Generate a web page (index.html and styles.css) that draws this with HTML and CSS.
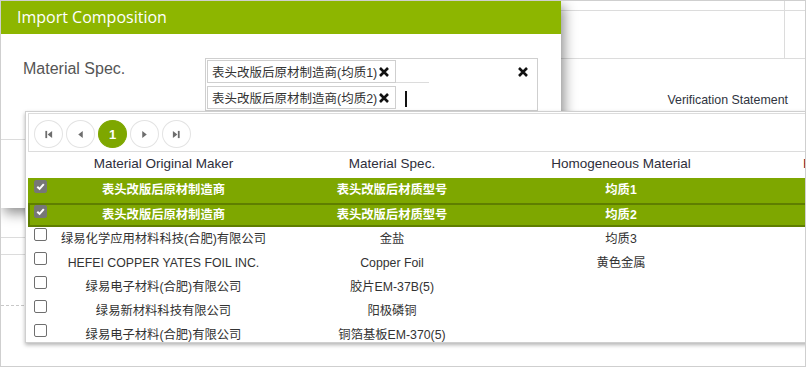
FILE: index.html
```html
<!DOCTYPE html>
<html>
<head>
<meta charset="utf-8">
<link rel="stylesheet" href="styles.css">
</head>
<body>
<div class="page">
  <div class="bg">
    <div class="bg-row bg-r1"><div class="bg-c1"></div><div class="bg-c2"></div></div>
    <div class="bg-row bg-r2"><div class="bg-c1"></div><div class="bg-c2"></div></div>
    <div class="bg-r3"><span class="verif">Verification Statement</span></div>
    <div class="bg-r4"></div>
    <div class="bg-r5"></div>
    <div class="bg-r6"></div>
  </div>

  <div class="dialog">
    <div class="dlg-head">Import Composition</div>
    <div class="dlg-body">
      <div class="form-row">
        <div class="form-label">Material Spec.</div>
        <div class="ms">
          <div class="ms-tags">
            <div class="ms-line">
              <span class="tag">表头改版后原材制造商(均质1)<svg class="tag-x" viewBox="0 0 12 12"><path d="M2 2L10 10M10 2L2 10"/></svg></span>
              <span class="ms-under"></span>
            </div>
            <div class="ms-line">
              <span class="tag">表头改版后原材制造商(均质2)<svg class="tag-x" viewBox="0 0 12 12"><path d="M2 2L10 10M10 2L2 10"/></svg></span>
              <span class="caret"></span>
            </div>
          </div>
          <svg class="ms-clear" viewBox="0 0 12 12"><path d="M2 2L10 10M10 2L2 10"/></svg>
        </div>
      </div>
      <div class="dlg-sep"></div>
    </div>
  </div>

  <div class="dropdown">
    <div class="pager">
      <span class="pg-btn"><svg viewBox="0 0 10 10"><rect x="1.5" y="1" width="2" height="8"/><path d="M9 1L4 5L9 9Z"/></svg></span>
      <span class="pg-btn"><svg viewBox="0 0 10 10"><path d="M7.5 1L2.5 5L7.5 9Z"/></svg></span>
      <span class="pg-btn pg-active">1</span>
      <span class="pg-btn"><svg viewBox="0 0 10 10"><path d="M2.5 1L7.5 5L2.5 9Z"/></svg></span>
      <span class="pg-btn"><svg viewBox="0 0 10 10"><path d="M1 1L6 5L1 9Z"/><rect x="6.5" y="1" width="2" height="8"/></svg></span>
    </div>
    <div class="grid">
      <div class="row head">
        <div></div>
        <div>Material Original Maker</div>
        <div>Material Spec.</div>
        <div>Homogeneous Material</div>
        <div class="c4">Remark</div>
      </div>
      <div class="row sel">
        <div class="cb-cell"><span class="cb on"><svg viewBox="0 0 12 12"><path d="M2.5 6.2L5 8.6L9.6 3.4"/></svg></span></div>
        <div>表头改版后原材制造商</div>
        <div>表头改版后材质型号</div>
        <div>均质1</div>
        <div></div>
      </div>
      <div class="row sel focus">
        <div class="cb-cell"><span class="cb on"><svg viewBox="0 0 12 12"><path d="M2.5 6.2L5 8.6L9.6 3.4"/></svg></span></div>
        <div>表头改版后原材制造商</div>
        <div>表头改版后材质型号</div>
        <div>均质2</div>
        <div></div>
      </div>
      <div class="row">
        <div class="cb-cell"><span class="cb"></span></div>
        <div>绿易化学应用材料科技(合肥)有限公司</div>
        <div>金盐</div>
        <div>均质3</div>
        <div></div>
      </div>
      <div class="row">
        <div class="cb-cell"><span class="cb"></span></div>
        <div>HEFEI COPPER YATES FOIL INC.</div>
        <div>Copper Foil</div>
        <div>黄色金属</div>
        <div></div>
      </div>
      <div class="row">
        <div class="cb-cell"><span class="cb"></span></div>
        <div>绿易电子材料(合肥)有限公司</div>
        <div>胶片EM-37B(5)</div>
        <div></div>
        <div></div>
      </div>
      <div class="row">
        <div class="cb-cell"><span class="cb"></span></div>
        <div>绿易新材料科技有限公司</div>
        <div>阳极磷铜</div>
        <div></div>
        <div></div>
      </div>
      <div class="row">
        <div class="cb-cell"><span class="cb"></span></div>
        <div>绿易电子材料(合肥)有限公司</div>
        <div>铜箔基板EM-370(5)</div>
        <div></div>
        <div></div>
      </div>
    </div>
  </div>
</div>
</body>
</html>
```

FILE: styles.css
```css
* { box-sizing: border-box; }
html, body { margin: 0; padding: 0; background: #fff; }
body { font-family: "Liberation Sans", "Noto Sans CJK SC", sans-serif; color: #333; }

.page {
  position: relative;
  width: 806px;
  height: 367px;
  border: 1px solid #cfcfcf;
  overflow: hidden;
  background: #fff;
}

/* background table */
.bg { display: flex; flex-direction: column; }
.bg-row { display: grid; grid-template-columns: 1fr 21px; border-bottom: 1px solid #dcdcdc; }
.bg-c2 { border-left: 1px solid #dcdcdc; }
.bg-r1 { height: 10px; }
.bg-r2 { height: 48px; }
.bg-r3 {
  height: 53px;
  border-bottom: 1px solid #dcdcdc;
  display: flex;
  justify-content: flex-end;
  align-items: flex-end;
  padding: 0 17px 4px 0;
}
.verif { font-size: 12.4px; color: #2f3440; }
.bg-r4 { height: 126px; border-bottom: 1px solid #dcdcdc; }
.bg-r5 { height: 17px; border-bottom: 1px solid #dcdcdc; }
.bg-r6 { height: 51px; border-bottom: 1px dashed #c8c8c8; }

/* dialog */
.dialog {
  position: absolute;
  left: 0;
  top: 0;
  width: 560px;
  height: 207px;
  background: #fff;
  box-shadow: 3px 5px 12px rgba(0, 0, 0, 0.45);
}
.dlg-head {
  height: 33px;
  line-height: 32px;
  background: #8db600;
  color: #fff;
  font-family: "Open Sans", sans-serif;
  font-size: 16px;
  padding-left: 16px;
}
.dlg-body { padding-top: 24px; }
.form-row { display: flex; align-items: flex-start; }
.form-label {
  width: 204px;
  padding-left: 22px;
  padding-top: 2px;
  font-size: 16px;
  color: #555;
}
.ms {
  width: 333px;
  height: 53px;
  border: 1px solid #cfcfcf;
  padding: 1px;
  display: flex;
  justify-content: space-between;
}
.ms-tags { display: flex; flex-direction: column; gap: 3px; }
.ms-line { display: flex; align-items: stretch; height: 23px; }
.tag {
  display: flex;
  align-items: center;
  height: 23px;
  border: 1px solid #cfcfcf;
  padding: 0 5px 0 4px;
  font-size: 12.5px;
  color: #333;
  background: #fff;
}
.tag-x { width: 12px; height: 12px; margin-left: 1px; }
.tag-x path, .ms-clear path { stroke: #111; stroke-width: 2.6; fill: none; }
.ms-under { width: 33px; border-bottom: 1px solid #dcdcdc; }
.caret { width: 2px; height: 16px; background: #111; align-self: center; margin-left: 9px; margin-top: 2px; }
.ms-clear { width: 12px; height: 12px; margin: 6px 7px 0 0; }
.dlg-sep { margin-top: 28px; height: 1px; background: #dcdcdc; }

/* dropdown */
.dropdown {
  position: absolute;
  left: 24px;
  top: 110px;
  width: 800px;
  height: 232px;
  background: #fff;
  border: 1px solid #cfcfcf;
  padding: 1px 2px;
  box-shadow: 0 2px 4px rgba(0, 0, 0, 0.3);
  overflow: hidden;
}
.pager {
  height: 39px;
  border: 1px solid #dcdcdc;
  padding: 6px 5px 2px;
  display: flex;
  gap: 3px;
}
.pg-btn {
  width: 29px;
  height: 28px;
  border: 1px solid #e3e3e3;
  border-radius: 50%;
  display: flex;
  align-items: center;
  justify-content: center;
}
.pg-btn svg { width: 9px; height: 9px; fill: #6d6d6d; }
.pg-active {
  background: #7ea700;
  border-color: #7ea700;
  color: #fff;
  font-weight: bold;
  font-size: 13px;
}

.grid { display: flex; flex-direction: column; }
.row {
  display: grid;
  grid-template-columns: 27px 217px 240px 218px 1fr;
  height: 24px;
  line-height: 24px;
  font-size: 12.3px;
  color: #333;
  text-align: center;
  white-space: nowrap;
}
.row.head {
  height: 26px;
  line-height: 24px;
  font-size: 13.5px;
  color: #2e2e3a;
}
.row.head .c4 { text-align: left; padding-left: 73px; color: #7a1530; }
.row.sel { background: #7ea700; color: #fff; font-weight: bold; height: 25px; }
.row.sel.focus { height: 24px; box-shadow: inset 0 0 0 2px #5f7e00; }
.cb-cell { text-align: left; padding-left: 6px; }
.cb {
  display: inline-block;
  vertical-align: top;
  margin-top: 1px;
  width: 13px;
  height: 13px;
  border: 1px solid #6f6f6f;
  border-radius: 2px;
  background: #fff;
}
.row.sel .cb { margin-top: 2px; }
.cb.on { background: #777; border-color: #777; }
.cb svg { display: block; width: 11px; height: 11px; }
.cb svg path { stroke: #fff; stroke-width: 2.2; fill: none; }
```
